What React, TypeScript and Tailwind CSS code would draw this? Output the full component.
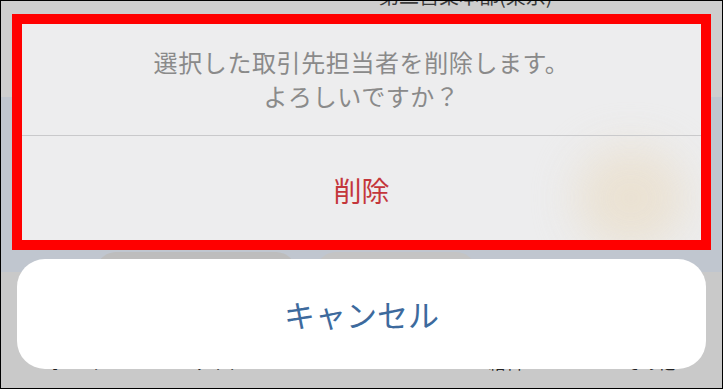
export default function App() {
  return (
    <div className="grid w-[723px] h-[389px] overflow-hidden border border-black font-['Noto_Sans_CJK_JP','Noto_Sans',sans-serif]">
      {/* page behind the sheet */}
      <div className="[grid-area:1/1] flex flex-col">
        <div className="h-[96px] bg-[#cecece]">
          <p className="-mt-[15px] ml-[378px] text-[20px] leading-[20px] text-[#3a3a3a] whitespace-nowrap">
            第二営業本部(東京)
          </p>
        </div>
        <div className="h-[175px] bg-[#c0c6cf] flex items-end gap-[20px] pl-[95px]">
          <div className="w-[200px] h-[20px] rounded-t-[20px] bg-[#bdbdbd]" />
          <div className="w-[160px] h-[20px] rounded-t-[20px] bg-[#c4c4c4]" />
        </div>
        <div className="flex-1 bg-[#c9c9c9] grid grid-cols-5 pt-[80px] text-[17px] leading-[20px] text-[#222] text-center">
          <span>ホーム</span>
          <span>サイト</span>
          <span />
          <span>給料</span>
          <span>その他</span>
        </div>
      </div>

      {/* action sheet */}
      <div className="[grid-area:1/1] flex flex-col px-[16px] pt-[17px]">
        <div className="relative">
          <div className="relative h-[226px] overflow-hidden rounded-[14px] bg-[#ededee] flex flex-col">
            <div className="absolute right-[20px] top-[130px] w-[110px] h-[100px] rounded-full bg-[#eadfcc] blur-[22px] opacity-80" />
            <div className="relative h-[118px] border-b border-[#c9c9cb] pt-[27px] text-center text-[24px] leading-[34px] tracking-[0.6px] text-[#8a8a8a]">
              <p>選択した取引先担当者を削除します。</p>
              <p>よろしいですか？</p>
            </div>
            <div className="relative flex-1 flex items-center justify-center text-[28px] text-[#c4363b]">
              削除
            </div>
          </div>
          <div className="absolute -left-[5px] -top-[4px] -right-[5px] -bottom-[6px] border-[10px] border-[#ff0000]" />
        </div>
        <div className="mt-[15px] h-[110px] rounded-[28px] bg-white flex items-center justify-center text-[31px] text-[#3d6a9d]">
          キャンセル
        </div>
      </div>
    </div>
  );
}
